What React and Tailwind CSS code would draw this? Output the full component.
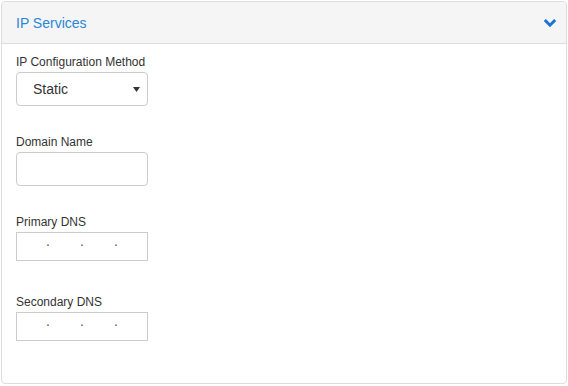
import React from "react";

const font = { fontFamily: '"Liberation Sans", Arial, sans-serif' };

const Label = ({ children }) => (
  <div className="h-[18px] text-[12px] leading-[17px] text-[#333]">{children}</div>
);

const IpInput = () => (
  <div className="flex h-[29px] w-[132px] items-start border border-[#ccc] bg-white pt-[1px] text-[14px] leading-[14px] text-[#555]">
    <span className="ml-[29px] w-[4px]">.</span>
    <span className="ml-[30px] w-[4px]">.</span>
    <span className="ml-[30px] w-[4px]">.</span>
  </div>
);

export default function App() {
  return (
    <div className="bg-white p-px" style={font}>
      <div className="h-[383px] overflow-hidden rounded-[4px] border border-[#ddd] bg-white">
        {/* header */}
        <div className="flex h-[42px] items-center justify-between border-b border-[#ddd] bg-[#f5f5f5] pl-[14px] pr-[9px]">
          <span className="text-[14px] leading-[20px] text-[#2a87d8]">IP Services</span>
          <svg width="14" height="10" viewBox="0 0 14 10" className="mt-[1px]">
            <path d="M1.8 2 L7 7.2 L12.2 2" fill="none" stroke="#1a73d9" strokeWidth="3" />
          </svg>
        </div>

        {/* body */}
        <div className="flex flex-col px-[14px] pt-[10px]">
          <div className="h-[80px]">
            <Label>IP Configuration Method</Label>
            <div className="flex h-[34px] w-[132px] items-center justify-between rounded-[4px] border border-[#ccc] bg-white pl-[16px] pr-[7px]">
              <span className="text-[14px] leading-[20px] text-[#333]">Static</span>
              <svg width="7" height="5" viewBox="0 0 7 5">
                <polygon points="0,0 7,0 3.5,5" fill="#333" />
              </svg>
            </div>
          </div>

          <div className="h-[80px]">
            <Label>Domain Name</Label>
            <div className="h-[34px] w-[132px] rounded-[4px] border border-[#ccc] bg-white" />
          </div>

          <div className="h-[80px]">
            <Label>Primary DNS</Label>
            <IpInput />
          </div>

          <div className="h-[80px]">
            <Label>Secondary DNS</Label>
            <IpInput />
          </div>
        </div>
      </div>
    </div>
  );
}
